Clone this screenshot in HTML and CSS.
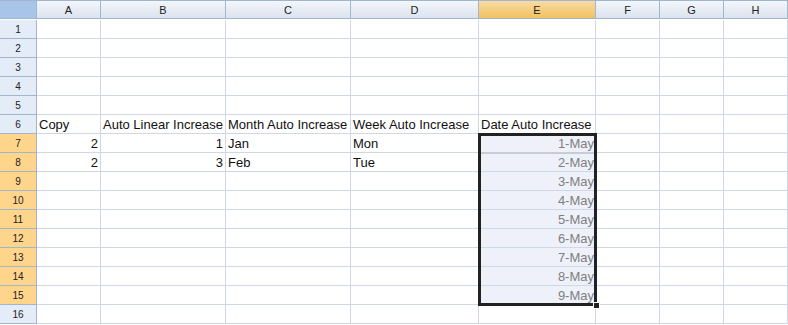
FILE: index.html
```html
<!DOCTYPE html>
<html lang="en">
<head>
<meta charset="UTF-8" />
<title>Sheet</title>
<link rel="stylesheet" href="styles.css">
</head>
<body>

<div class="sheet">
  <div class="grid" id="grid"></div>
  <div class="selection">
    <div class="active-line"></div>
    <div class="handle"></div>
  </div>
</div>

<script>
  const cols = ["A", "B", "C", "D", "E", "F", "G", "H"];
  const data = {
    6: ["Copy", "Auto Linear Increase", "Month Auto Increase", "Week Auto Increase", "Date Auto Increase"],
    7: ["2", "1", "Jan", "Mon", "1-May"],
    8: ["2", "3", "Feb", "Tue", "2-May"]
  };
  const numeric = { 7: [0, 1], 8: [0, 1] };

  const grid = document.getElementById("grid");
  let html = '<div class="corner"></div>';
  cols.forEach(c => {
    html += `<div class="col-head${c === "E" ? " sel" : ""}">${c}</div>`;
  });

  for (let r = 1; r <= 16; r++) {
    const selRow = r >= 7 && r <= 15;
    html += `<div class="row-head${selRow ? " sel" : ""}">${r}</div>`;
    cols.forEach((c, i) => {
      let text = (data[r] && data[r][i]) || "";
      let cls = "cell";
      if (c === "E" && selRow) {
        cls += " picked date";
        text = `${r - 6}-May`;
      } else if (numeric[r] && numeric[r].includes(i)) {
        cls += " num";
      }
      html += `<div class="${cls}">${text}</div>`;
    });
  }
  grid.innerHTML = html;
</script>

</body>
</html>
```

FILE: styles.css
```css
* {
  box-sizing: border-box;
}
body {
  margin: 0;
  background: #fff;
  overflow: hidden;
}
.sheet {
  position: relative;
  width: 788px;
  height: 325px;
}
.grid {
  display: grid;
  grid-template-columns: 37px 64px 125px 125px 128px 117px 64px 64px 64px;
  grid-auto-rows: 19px;
  border-top: 1px solid #9eb6ce;
}
.corner {
  height: 18px;
  background: #a9c4e9;
  border-right: 1px solid #9eb6ce;
  border-bottom: 1px solid #9eb6ce;
}
.col-head {
  height: 18px;
  background: linear-gradient(#f3f6fb, #dbe3ee);
  border-right: 1px solid #9eb6ce;
  border-bottom: 1px solid #9eb6ce;
  font-family: "Liberation Sans", Arial, sans-serif;
  font-size: 11px;
  color: #222;
  text-align: center;
  line-height: 18px;
}
.col-head.sel {
  background: linear-gradient(#f9dba4, #f1c15f);
}
.row-head {
  background: #e4ecf7;
  border-right: 1px solid #9eb6ce;
  border-bottom: 1px solid #9eb6ce;
  font-family: "Liberation Sans", Arial, sans-serif;
  font-size: 10px;
  color: #222;
  text-align: center;
  line-height: 19px;
}
.row-head.sel {
  background: #ffd58c;
}
.cell {
  border-right: 1px solid #d0d7e5;
  border-bottom: 1px solid #d0d7e5;
  font-family: "Liberation Sans", Arial, sans-serif;
  font-size: 13px;
  color: #111;
  line-height: 20px;
  padding: 0 2px;
  white-space: nowrap;
  overflow: hidden;
}
.cell.num {
  text-align: right;
}
.cell.picked {
  background: #eef1fa;
}
.cell.date {
  text-align: right;
  color: #7f7f7f;
  padding-right: 1px;
}
.selection {
  position: absolute;
  left: 478px;
  top: 133px;
  width: 119px;
  height: 173px;
  border: 3px solid #222;
}
.active-line {
  position: absolute;
  left: 0;
  right: 0;
  top: 16px;
  height: 2px;
  background: #c8ccd6;
}
.handle {
  position: absolute;
  right: -6px;
  bottom: -6px;
  width: 7px;
  height: 7px;
  background: #222;
  border: 1px solid #fff;
}
```
